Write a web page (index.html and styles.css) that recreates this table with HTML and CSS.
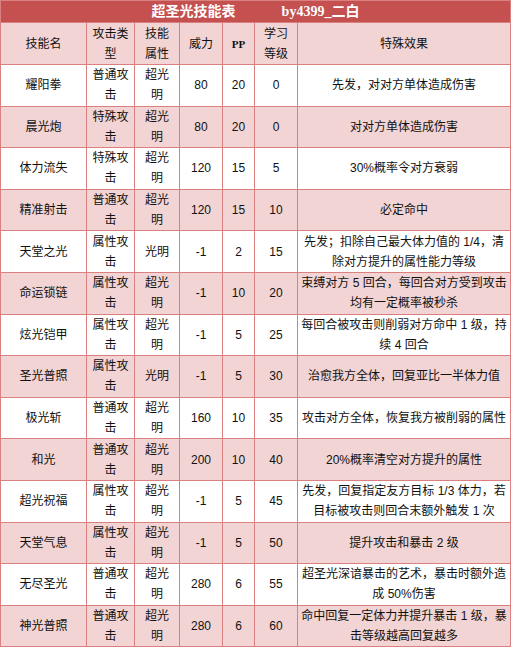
FILE: index.html
```html
<!DOCTYPE html>
<html lang="zh">
<head>
<meta charset="utf-8">
<title>超圣光技能表</title>
<link rel="stylesheet" href="styles.css">
</head>
<body>
<table class="skills">
  <colgroup>
    <col class="c-name"><col class="c-type"><col class="c-attr"><col class="c-pow"><col class="c-pp"><col class="c-lv"><col class="c-eff">
  </colgroup>
  <tr class="title-row">
    <td colspan="7"><span class="t-main">超圣光技能表</span><span class="t-by">by4399_二白</span></td>
  </tr>
  <tr class="head-row">
    <td>技能名</td>
    <td>攻击类<br>型</td>
    <td>技能<br>属性</td>
    <td>威力</td>
    <td class="pp">PP</td>
    <td>学习<br>等级</td>
    <td>特殊效果</td>
  </tr>
  <tr class="odd">
    <td>耀阳拳</td><td>普通攻<br>击</td><td>超光<br>明</td><td>80</td><td>20</td><td>0</td><td>先发，对对方单体造成伤害</td>
  </tr>
  <tr class="even">
    <td>晨光炮</td><td>特殊攻<br>击</td><td>超光<br>明</td><td>80</td><td>20</td><td>0</td><td>对对方单体造成伤害</td>
  </tr>
  <tr class="odd">
    <td>体力流失</td><td>特殊攻<br>击</td><td>超光<br>明</td><td>120</td><td>15</td><td>5</td><td>30%概率令对方衰弱</td>
  </tr>
  <tr class="even">
    <td>精准射击</td><td>普通攻<br>击</td><td>超光<br>明</td><td>120</td><td>15</td><td>10</td><td>必定命中</td>
  </tr>
  <tr class="odd">
    <td>天堂之光</td><td>属性攻<br>击</td><td>光明</td><td>-1</td><td>2</td><td>15</td><td>先发；扣除自己最大体力值的 1/4，清<br>除对方提升的属性能力等级</td>
  </tr>
  <tr class="even">
    <td>命运锁链</td><td>属性攻<br>击</td><td>超光<br>明</td><td>-1</td><td>10</td><td>20</td><td>束缚对方 5 回合，每回合对方受到攻击<br>均有一定概率被秒杀</td>
  </tr>
  <tr class="odd">
    <td>炫光铠甲</td><td>属性攻<br>击</td><td>超光<br>明</td><td>-1</td><td>5</td><td>25</td><td>每回合被攻击则削弱对方命中 1 级，持<br>续 4 回合</td>
  </tr>
  <tr class="even">
    <td>圣光普照</td><td>属性攻<br>击</td><td>光明</td><td>-1</td><td>5</td><td>30</td><td>治愈我方全体，回复亚比一半体力值</td>
  </tr>
  <tr class="odd">
    <td>极光斩</td><td>普通攻<br>击</td><td>超光<br>明</td><td>160</td><td>10</td><td>35</td><td>攻击对方全体，恢复我方被削弱的属性</td>
  </tr>
  <tr class="even">
    <td>和光</td><td>普通攻<br>击</td><td>超光<br>明</td><td>200</td><td>10</td><td>40</td><td>20%概率清空对方提升的属性</td>
  </tr>
  <tr class="odd">
    <td>超光祝福</td><td>属性攻<br>击</td><td>超光<br>明</td><td>-1</td><td>5</td><td>45</td><td>先发，回复指定友方目标 1/3 体力，若<br>目标被攻击则回合末额外触发 1 次</td>
  </tr>
  <tr class="even">
    <td>天堂气息</td><td>属性攻<br>击</td><td>超光<br>明</td><td>-1</td><td>5</td><td>50</td><td>提升攻击和暴击 2 级</td>
  </tr>
  <tr class="odd">
    <td>无尽圣光</td><td>普通攻<br>击</td><td>超光<br>明</td><td>280</td><td>6</td><td>55</td><td>超圣光深谙暴击的艺术，暴击时额外造<br>成 50%伤害</td>
  </tr>
  <tr class="even">
    <td>神光普照</td><td>普通攻<br>击</td><td>超光<br>明</td><td>280</td><td>6</td><td>60</td><td>命中回复一定体力并提升暴击 1 级，暴<br>击等级越高回复越多</td>
  </tr>
</table>
</body>
</html>
```

FILE: styles.css
```css
html, body {
  margin: 0;
  padding: 0;
  background: #ffffff;
}

.skills {
  border-collapse: collapse;
  table-layout: fixed;
  width: 510px;
  font-family: "Liberation Sans", "Noto Sans CJK SC", sans-serif;
  font-size: 12px;
  color: #111111;
}

.c-name { width: 86px; }
.c-type { width: 48px; }
.c-attr { width: 45px; }
.c-pow { width: 43px; }
.c-pp { width: 32px; }
.c-lv { width: 43px; }
.c-eff { width: 213px; }

.skills td {
  border: 1px solid #da8080;
  text-align: center;
  vertical-align: middle;
  padding: 0 2px;
  line-height: 20px;
}

.title-row td {
  height: 21px;
  padding: 0;
  background: #c4504f;
  color: #ffffff;
  font-weight: bold;
  font-size: 14px;
  line-height: 21px;
  font-family: "Liberation Serif", "Noto Sans CJK SC", serif;
}

.t-main {
  margin-right: 46px;
}

.head-row td {
  height: 41px;
  background: #f2d4d4;
}

.head-row .pp {
  font-family: "Liberation Serif", serif;
  font-weight: bold;
  font-size: 11px;
}

.skills tr.odd td,
.skills tr.even td {
  height: 40.6px;
}

.odd td {
  background: #ffffff;
}

.even td {
  background: #f2d4d4;
}
```
